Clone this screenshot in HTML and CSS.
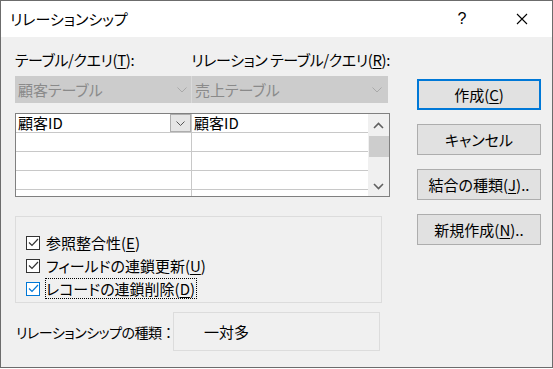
FILE: index.html
```html
<!DOCTYPE html>
<html lang="ja">
<head>
  <meta charset="UTF-8" />
  <title>リレーションシップ</title>
  <link rel="stylesheet" href="styles.css">
</head>
<body>
  <div class="window">
    <div class="titlebar">
      <span class="title">リレーションシップ</span>
      <span class="help">?</span>
      <span class="close">
        <svg width="12" height="12" viewBox="0 0 12 12"><path d="M1 1 L11 11 M11 1 L1 11" stroke="#000" stroke-width="1.1" fill="none"/></svg>
      </span>
    </div>

    <div class="content">
      <div class="left">
        <div class="labels">
          <span class="label first">テーブル/クエリ(<u>T</u>):</span>
          <span class="label">リレーション テーブル/クエリ(<u>R</u>):</span>
        </div>

        <div class="combos">
          <div class="combo first">
            <span>顧客テーブル</span>
            <svg class="chev" width="10" height="6" viewBox="0 0 10 6"><path d="M0.5 0.5 L5 5 L9.5 0.5" stroke="#a9a9a9" fill="none"/></svg>
          </div>
          <div class="combo second">
            <span>売上テーブル</span>
            <svg class="chev" width="10" height="6" viewBox="0 0 10 6"><path d="M0.5 0.5 L5 5 L9.5 0.5" stroke="#a9a9a9" fill="none"/></svg>
          </div>
        </div>

        <div class="grid">
          <div class="rows">
            <div class="row">
              <div class="cell left-cell">
                <span>顧客ID</span>
                <span class="drop">
                  <svg width="9" height="5" viewBox="0 0 9 5"><path d="M0.5 0.5 L4.5 4.5 L8.5 0.5" stroke="#555" fill="none"/></svg>
                </span>
              </div>
              <div class="cell">顧客ID</div>
            </div>
            <div class="row"><div class="cell left-cell"></div><div class="cell"></div></div>
            <div class="row"><div class="cell left-cell"></div><div class="cell"></div></div>
            <div class="row"><div class="cell left-cell"></div><div class="cell"></div></div>
            <div class="row"><div class="cell left-cell"></div><div class="cell"></div></div>
          </div>
          <div class="scrollbar">
            <svg class="arrow" width="11" height="7" viewBox="0 0 11 7"><path d="M1 6 L5.5 1.5 L10 6" stroke="#606060" stroke-width="1.6" fill="none"/></svg>
            <div class="thumb"></div>
            <div class="track"></div>
            <svg class="arrow" width="11" height="7" viewBox="0 0 11 7"><path d="M1 1 L5.5 5.5 L10 1" stroke="#606060" stroke-width="1.6" fill="none"/></svg>
          </div>
        </div>

        <div class="options">
          <label class="check">
            <span class="box"><svg width="11" height="9" viewBox="0 0 11 9"><path d="M1 4.5 L4 7.5 L10 1" stroke="#333" stroke-width="1.2" fill="none"/></svg></span>
            <span>参照整合性(<u>E</u>)</span>
          </label>
          <label class="check">
            <span class="box"><svg width="11" height="9" viewBox="0 0 11 9"><path d="M1 4.5 L4 7.5 L10 1" stroke="#333" stroke-width="1.2" fill="none"/></svg></span>
            <span>フィールドの連鎖更新(<u>U</u>)</span>
          </label>
          <label class="check focused">
            <span class="box"><svg width="11" height="9" viewBox="0 0 11 9"><path d="M1 4.5 L4 7.5 L10 1" stroke="#0078d7" stroke-width="1.2" fill="none"/></svg></span>
            <span class="focus">レコードの連鎖削除(<u>D</u>)</span>
          </label>
        </div>

        <div class="type-row">
          <span class="type-label">リレーションシップの種類<span class="colon">：</span></span>
          <div class="type-box">一対多</div>
        </div>
      </div>

      <div class="buttons">
        <button class="btn default">作成(<u>C</u>)</button>
        <button class="btn">キャンセル</button>
        <button class="btn">結合の種類(<u>J</u>)..</button>
        <button class="btn">新規作成(<u>N</u>)..</button>
      </div>
    </div>
  </div>
</body>
</html>
```

FILE: styles.css
```css
* {
  box-sizing: border-box;
  margin: 0;
  padding: 0;
}

body {
  background: #ffffff;
  font-family: "Noto Sans CJK JP", "Noto Sans", sans-serif;
  font-size: 15px;
  color: #000;
  font-feature-settings: "palt";
}

u {
  text-decoration: underline;
  text-underline-offset: 2px;
}

.window {
  width: 553px;
  height: 368px;
  border: 1px solid #6c6c6c;
  background: #f0f0f0;
}

.titlebar {
  height: 36px;
  background: #ffffff;
  display: flex;
  align-items: center;
  padding-left: 9px;
}

.title {
  flex: 1;
  font-size: 15px;
  line-height: 20px;
}

.help {
  width: 20px;
  text-align: center;
  font-family: "Liberation Sans", sans-serif;
  font-size: 16px;
  margin-right: 44px;
}

.close {
  display: flex;
  margin-right: 24px;
}

.content {
  display: flex;
  padding: 13px 0 0 14px;
}

.left {
  width: 375px;
}

.labels {
  display: flex;
  height: 20px;
  line-height: 20px;
  white-space: nowrap;
  letter-spacing: -0.4px;
}

.label.first {
  width: 178px;
}

.combos {
  display: flex;
  margin-top: 6px;
  height: 27px;
}

.combo {
  display: flex;
  align-items: center;
  background: #cccccc;
  color: #8a8a8a;
  padding: 0 4px 0 3px;
}

.combo span {
  flex: 1;
}

.combo.first {
  width: 177px;
  border-right: 1px solid #dadada;
}

.combo.second {
  width: 196px;
  padding-right: 6px;
}

.chev {
  display: block;
}

.grid {
  display: flex;
  margin-top: 10px;
  height: 84px;
  border: 1px solid #808080;
  background: #ffffff;
}

.rows {
  flex: 1;
  overflow: hidden;
}

.row {
  display: flex;
  height: 19px;
  border-bottom: 1px solid #c8c8c8;
}

.cell {
  flex: 1;
  font-size: 15px;
  line-height: 18px;
  padding-left: 2px;
  font-feature-settings: normal;
}

.left-cell {
  flex: none;
  width: 176px;
  border-right: 1px solid #c8c8c8;
  display: flex;
  justify-content: space-between;
  padding-right: 0;
}

.drop {
  width: 21px;
  height: 18px;
  border: 1px solid #adadad;
  background: #e5e5e5;
  display: flex;
  align-items: center;
  justify-content: center;
}

.scrollbar {
  width: 21px;
  background: #f0f0f0;
  display: flex;
  flex-direction: column;
  align-items: center;
}

.arrow {
  margin: 8px 0 6px;
  flex: none;
}

.thumb {
  width: 20px;
  height: 21px;
  margin-top: 1px;
  background: #cdcdcd;
}

.track {
  flex: 1;
}

.options {
  width: 367px;
  height: 87px;
  margin-top: 19px;
  border: 1px solid #dcdcdc;
  padding: 15px 0 0 10px;
  display: flex;
  flex-direction: column;
  gap: 2px;
}

.check {
  display: flex;
  align-items: center;
  height: 21px;
  white-space: nowrap;
}

.box {
  width: 14px;
  height: 14px;
  border: 1px solid #333333;
  background: #ffffff;
  display: flex;
  align-items: center;
  justify-content: center;
  margin-right: 6px;
}

.focused .box {
  border-color: #0078d7;
}

.focus {
  outline: 1px dotted #000;
  line-height: 19px;
  padding-right: 1px;
}

.type-row {
  display: flex;
  align-items: center;
  margin-top: 9px;
  padding-left: 1px;
}

.type-label {
  width: 157px;
  white-space: nowrap;
  font-size: 14px;
  letter-spacing: -0.5px;
}

.colon {
  font-feature-settings: normal;
  letter-spacing: 0;
}

.type-box {
  width: 207px;
  height: 39px;
  border: 1px solid #dcdcdc;
  padding-left: 30px;
  line-height: 37px;
}

.buttons {
  display: flex;
  flex-direction: column;
  gap: 14px;
  margin: 29px 0 0 27px;
}

.btn {
  width: 124px;
  height: 31px;
  background: #e1e1e1;
  border: 1px solid #adadad;
  font-family: inherit;
  font-size: 15px;
  font-feature-settings: "palt";
  color: #000;
}

.btn.default {
  border: 2px solid #0078d7;
}
```
